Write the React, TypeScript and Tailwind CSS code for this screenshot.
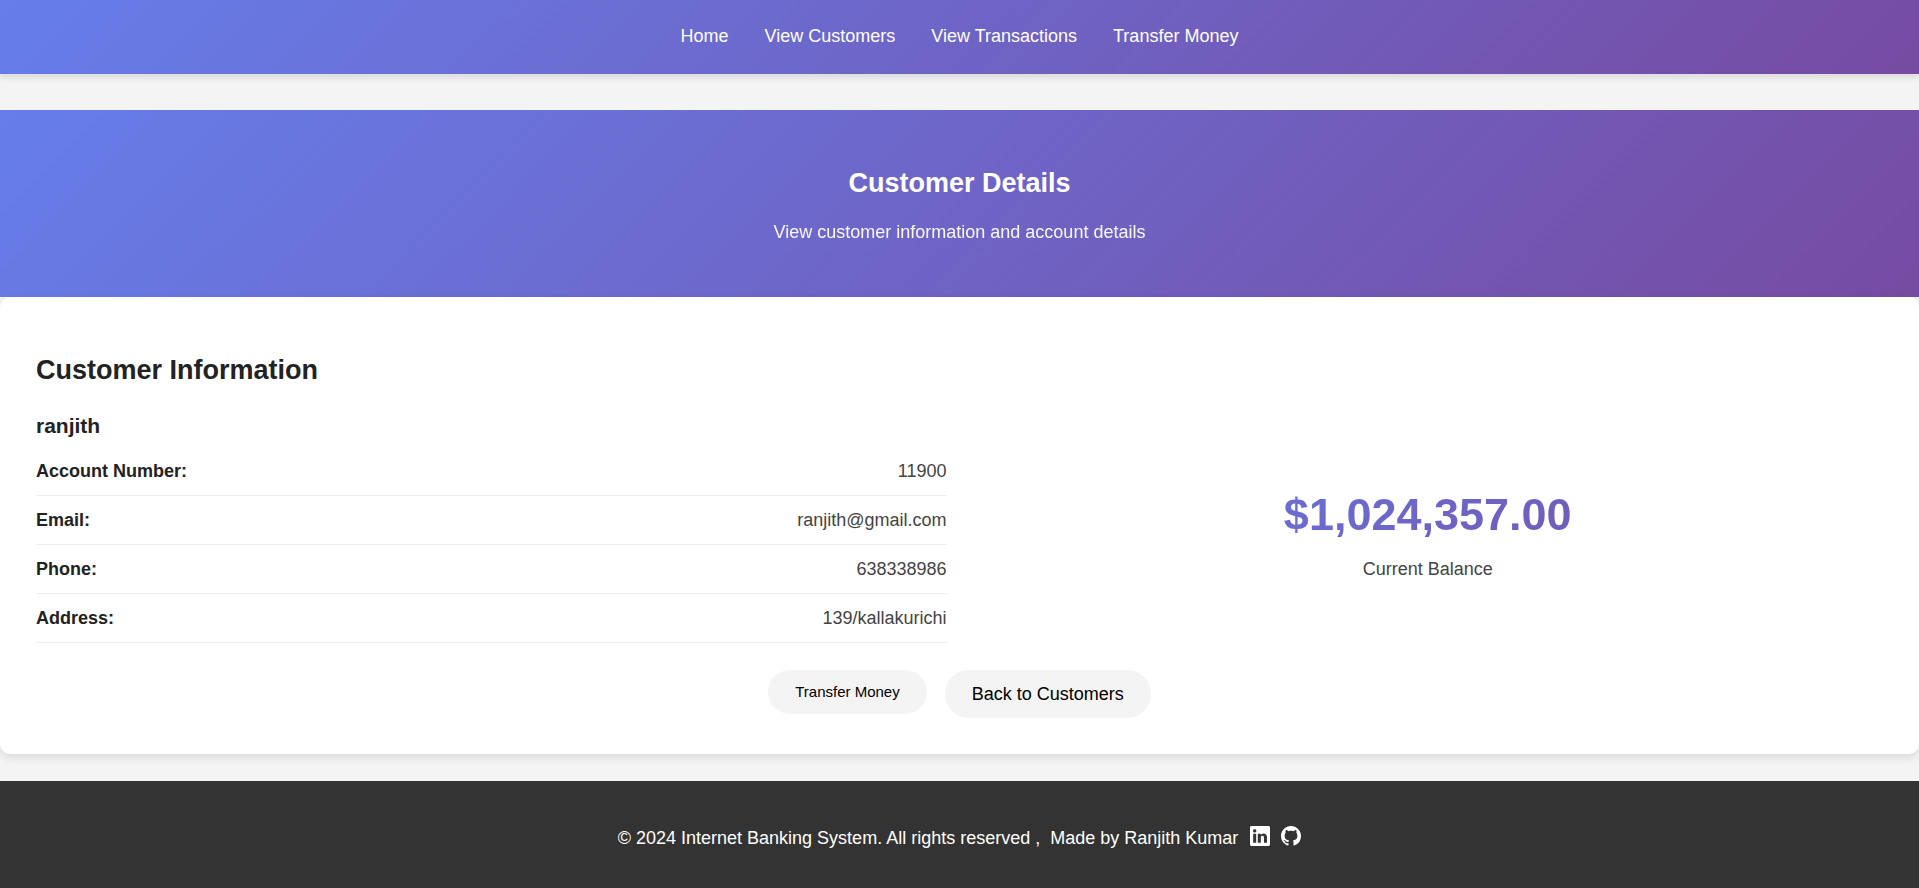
import { BsGithub, BsLinkedin } from "react-icons/bs";

const links = ["Home", "View Customers", "View Transactions", "Transfer Money"];

const details = [
  { label: "Account Number:", value: "11900" },
  { label: "Email:", value: "ranjith@gmail.com" },
  { label: "Phone:", value: "638338986" },
  { label: "Address:", value: "139/kallakurichi" },
];

function Header() {
  return (
    <header className="bg-linear-[135deg,#667eea,#764ba2] px-9 pt-[21px] pb-[23px] shadow-[0_4px_6px_rgba(0,0,0,0.1)]">
      <nav>
        <ul className="flex flex-wrap justify-center gap-9">
          {links.map((link) => (
            <li key={link}>
              <a href="#" className="text-white">{link}</a>
            </li>
          ))}
        </ul>
      </nav>
    </header>
  );
}

function Hero() {
  return (
    <section className="mt-9 bg-linear-[135deg,#667eea,#764ba2] px-9 py-[50px] text-center text-white">
      <h1 className="mb-[11px] text-[27px] leading-[46px] font-bold">Customer Details</h1>
      <p className="opacity-95">View customer information and account details</p>
    </section>
  );
}

function CustomerCard() {
  return (
    <main className="relative rounded-[10px] bg-white px-9 pt-[50px] pb-9 shadow-[0_4px_10px_rgba(0,0,0,0.1)]">
      <h2 className="mb-4 text-[27px] leading-[46px] font-bold">Customer Information</h2>
      <div className="grid grid-cols-1 items-center gap-[26px] md:grid-cols-2">
        <div>
          <h3 className="mb-1 text-[21px] leading-[34px] font-bold">ranjith</h3>
          <dl>
            {details.map(({ label, value }) => (
              <div key={label} className="flex justify-between border-b border-[#eee] py-[9px]">
                <dt className="font-bold">{label}</dt>
                <dd className="text-[#444]">{value}</dd>
              </div>
            ))}
          </dl>
        </div>
        <div className="pt-[11px] text-center">
          <p className="mb-[3px] bg-linear-[135deg,#667eea,#764ba2] bg-clip-text text-[45px] leading-[72px] font-bold text-transparent">
            $1,024,357.00
          </p>
          <p className="text-[#444]">Current Balance</p>
        </div>
      </div>
      <div className="mt-[27px] flex flex-wrap items-start justify-center gap-[18px]">
        <button type="button" className="rounded-full bg-[#f4f4f4] px-[27px] py-3 text-[15px] leading-5 text-black">
          Transfer Money
        </button>
        <a href="#" className="rounded-full bg-[#f4f4f4] px-[27px] py-[9px] text-black">
          Back to Customers
        </a>
      </div>
    </main>
  );
}

function Footer() {
  return (
    <footer className="mt-[27px] flex flex-1 flex-wrap items-center justify-center bg-[#333] px-9 pt-10 pb-[34px] text-white">
      <p className="whitespace-pre">© 2024 Internet Banking System. All rights reserved ,  Made by Ranjith Kumar</p>
      <div className="mb-1 ml-3 flex gap-[11px]">
        <a href="#" aria-label="LinkedIn">
          <BsLinkedin size={20} />
        </a>
        <a href="#" aria-label="GitHub">
          <BsGithub size={20} />
        </a>
      </div>
    </footer>
  );
}

export default function App() {
  return (
    <div className="flex min-h-screen flex-col bg-[#f4f4f4] font-['Liberation_Sans',Arial,sans-serif] text-[18px] leading-[30px] text-[#222]">
      <Header />
      <Hero />
      <CustomerCard />
      <Footer />
    </div>
  );
}
